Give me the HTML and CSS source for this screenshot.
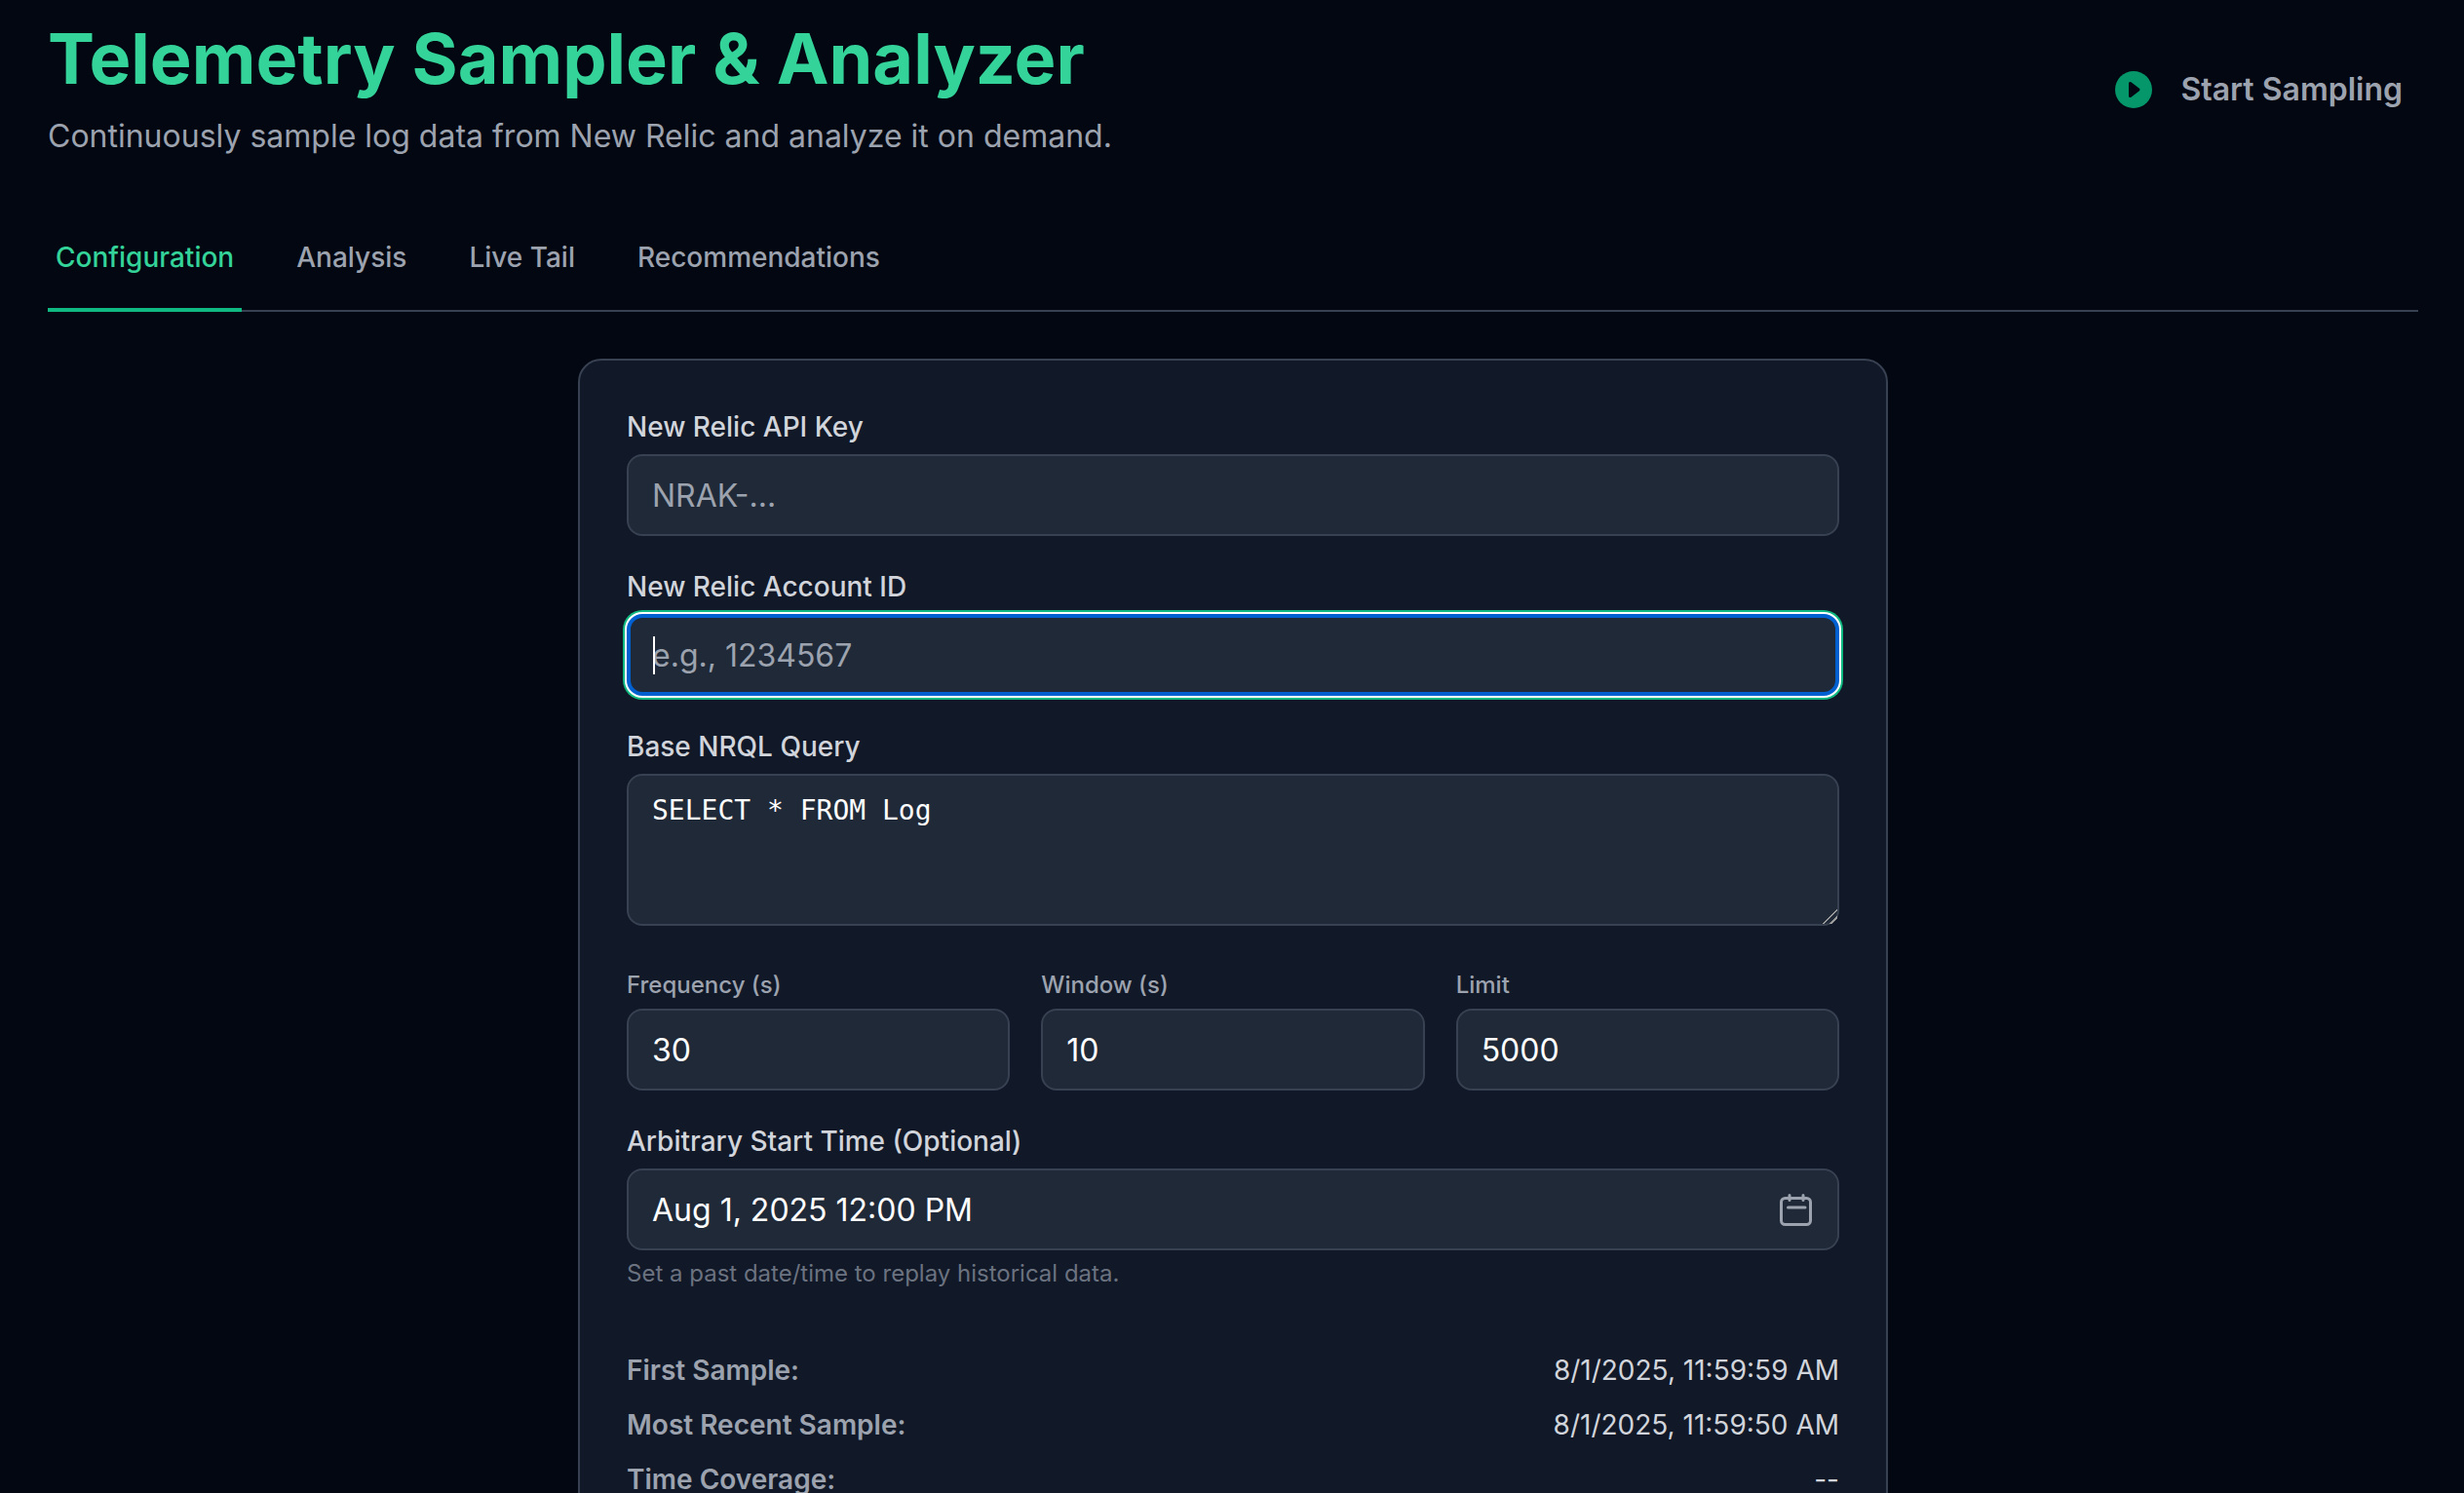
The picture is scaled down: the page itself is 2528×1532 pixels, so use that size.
FILE: index.html
```html
<!DOCTYPE html>
<html lang="en">
<head>
    <meta charset="UTF-8">
    <meta name="viewport" content="width=device-width, initial-scale=1.0">
    <title>Telemetry Sampler &amp; Analyzer</title>
    <link rel="stylesheet" href="styles.css">
</head>
<body>
    <div class="page">
        <header class="header">
            <div>
                <h1 class="title">Telemetry Sampler &amp; Analyzer</h1>
                <p class="subtitle">Continuously sample log data from New Relic and analyze it on demand.</p>
            </div>
            <button class="start-btn" type="button">
                <svg class="start-icon" viewBox="0 0 48 48">
                    <circle cx="24" cy="24" r="19" fill="#059669"/>
                    <path d="M20.5 17.5v13l8.5-6.5z" fill="#030712" stroke="#030712" stroke-width="3" stroke-linejoin="round"/>
                </svg>
                Start Sampling
            </button>
        </header>

        <nav class="tabs">
            <a class="tab active" href="#">Configuration</a>
            <a class="tab" href="#">Analysis</a>
            <a class="tab" href="#">Live Tail</a>
            <a class="tab" href="#">Recommendations</a>
        </nav>

        <main class="card">
            <div class="field">
                <label class="label" for="api-key">New Relic API Key</label>
                <input class="input" id="api-key" type="text" placeholder="NRAK-...">
            </div>

            <div class="field">
                <label class="label" for="account-id">New Relic Account ID</label>
                <div class="focus-wrap">
                    <input class="input focused" id="account-id" type="text" placeholder="e.g., 1234567">
                    <span class="caret"></span>
                </div>
            </div>

            <div class="field">
                <label class="label" for="nrql">Base NRQL Query</label>
                <textarea class="input query" id="nrql" rows="3">SELECT * FROM Log</textarea>
            </div>

            <div class="field-row">
                <div>
                    <label class="label small" for="frequency">Frequency (s)</label>
                    <input class="input" id="frequency" type="text" value="30">
                </div>
                <div>
                    <label class="label small" for="window">Window (s)</label>
                    <input class="input" id="window" type="text" value="10">
                </div>
                <div>
                    <label class="label small" for="limit">Limit</label>
                    <input class="input" id="limit" type="text" value="5000">
                </div>
            </div>

            <div class="field">
                <label class="label" for="start-time">Arbitrary Start Time (Optional)</label>
                <div class="input date-input" id="start-time">
                    <span>Aug 1, 2025 12:00 PM</span>
                    <svg class="calendar-icon" viewBox="0 0 33 33" fill="none" stroke="#9ca3af" stroke-width="3" stroke-linecap="round">
                        <rect x="1.5" y="4.5" width="30" height="27" rx="4"/>
                        <path d="M10 1.5v5M24 1.5v5M8.5 14h17.5"/>
                    </svg>
                </div>
                <p class="hint">Set a past date/time to replay historical data.</p>
            </div>

            <dl class="stats">
                <div class="stat"><dt>First Sample:</dt><dd>8/1/2025, 11:59:59 AM</dd></div>
                <div class="stat"><dt>Most Recent Sample:</dt><dd>8/1/2025, 11:59:50 AM</dd></div>
                <div class="stat"><dt>Time Coverage:</dt><dd>--</dd></div>
            </dl>
        </main>
    </div>
</body>
</html>
```

FILE: styles.css
```css
* {
    box-sizing: border-box;
}

html, body {
    height: 100%;
    margin: 0;
    overflow: hidden;
}

body {
    background-color: #030712;
    color: #fff;
    font-family: Inter, "Noto Sans", sans-serif;
}

.page {
    padding: 20px 47px 0 49px;
}

.header {
    display: flex;
    justify-content: space-between;
    align-items: flex-start;
}

.title {
    margin: 0;
    font-size: 72px;
    line-height: 80px;
    font-weight: 700;
    color: #34d399;
}

.subtitle {
    margin: 16px 0 0;
    font-size: 32px;
    line-height: 48px;
    color: #9ca3af;
}

.start-btn {
    display: flex;
    align-items: center;
    gap: 24px;
    margin-top: 36px;
    padding: 12px 16px;
    background: none;
    border: none;
    color: #9ca3af;
    font-family: inherit;
    font-size: 32px;
    line-height: 48px;
    font-weight: 600;
}

.start-icon {
    width: 48px;
    height: 48px;
}

.tabs {
    display: flex;
    gap: 48px;
    margin-top: 64px;
    border-bottom: 2px solid #374151;
}

.tab {
    padding: 16px 8px 32px;
    margin-bottom: -2px;
    border-bottom: 4px solid transparent;
    font-size: 28px;
    line-height: 40px;
    font-weight: 500;
    color: #9ca3af;
    text-decoration: none;
}

.tab.active {
    color: #34d399;
    border-bottom-color: #10b981;
}

.card {
    width: 1344px;
    margin: 48px auto 0;
    padding: 48px;
    background-color: #111827;
    border: 2px solid #374151;
    border-radius: 24px;
}

.field {
    margin-bottom: 32px;
}

.label {
    display: block;
    margin-bottom: 8px;
    font-size: 28px;
    line-height: 40px;
    font-weight: 500;
    color: #d1d5db;
}

.label.small {
    font-size: 24px;
    line-height: 32px;
    color: #9ca3af;
}

.input {
    display: block;
    width: 100%;
    height: 84px;
    padding: 0 24px;
    background-color: #1f2937;
    border: 2px solid #374151;
    border-radius: 16px;
    outline: none;
    color: #fff;
    font-family: inherit;
    font-size: 32px;
}

.input::placeholder {
    color: #9ca3af;
    opacity: 1;
}

.focus-wrap {
    position: relative;
}

.focused {
    border: 4px solid #0060d0;
    padding: 0 22px;
    box-shadow: 0 0 0 2px #fff, 0 0 0 4px #10b981;
}

.caret {
    position: absolute;
    left: 27px;
    top: 23px;
    width: 2px;
    height: 39px;
    background-color: #fff;
}

.query {
    height: 156px;
    padding: 16px 24px;
    margin-bottom: 45px;
    font-family: "DejaVu Sans Mono", monospace;
    font-size: 28px;
    line-height: 40px;
}

/* grip lines in the textarea corner */
.query::-webkit-resizer {
    background: linear-gradient(135deg,
        transparent 10.5px, #9a9a9a 10.5px, #9a9a9a 12px,
        transparent 12px, transparent 15.5px, #9a9a9a 15.5px, #9a9a9a 17px,
        transparent 17px);
}

.field-row {
    display: grid;
    grid-template-columns: repeat(3, 1fr);
    gap: 32px;
    margin-bottom: 32px;
}

.date-input {
    display: flex;
    align-items: center;
    justify-content: space-between;
    padding-right: 26px;
}

.calendar-icon {
    width: 33px;
    height: 33px;
}

.hint {
    margin: 8px 0 0;
    font-size: 24px;
    line-height: 32px;
    color: #6b7280;
}

.stats {
    margin: 63px 0 0;
    display: flex;
    flex-direction: column;
    gap: 16px;
}

.stat {
    display: flex;
    justify-content: space-between;
    font-size: 28px;
    line-height: 40px;
}

.stat dt {
    font-weight: 600;
    color: #9ca3af;
}

.stat dd {
    margin: 0;
    color: #d1d5db;
}
```
